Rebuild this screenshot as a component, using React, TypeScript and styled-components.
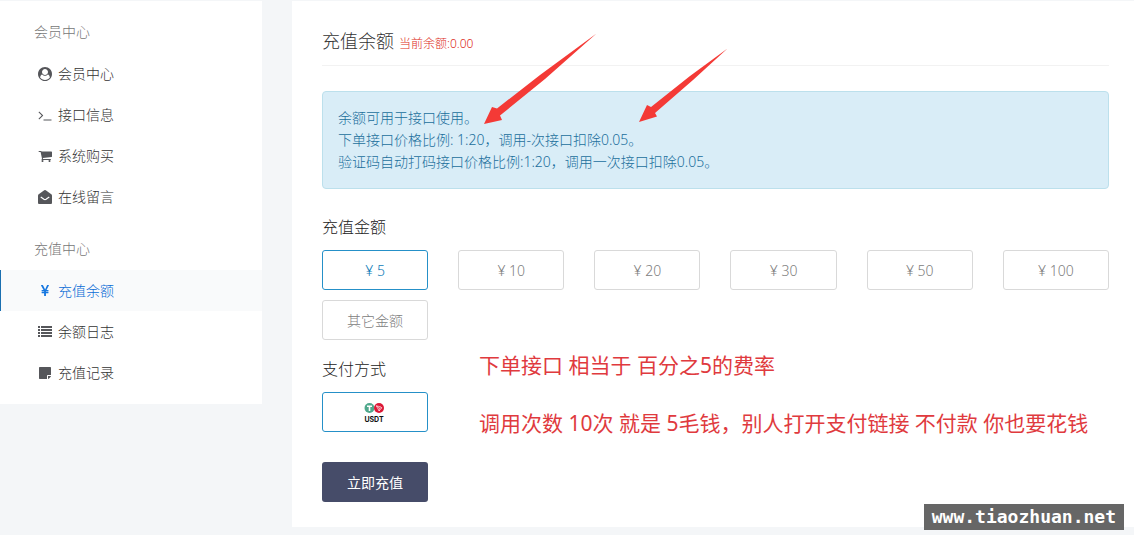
import React, { useState } from "react";
import styled, { createGlobalStyle } from "styled-components";

const GlobalStyle = createGlobalStyle`
  * { box-sizing: border-box; }
  body {
    margin: 0;
    background: #f4f6f8;
    color: #444;
    font: 300 14px/22px "Noto Sans", "Noto Sans CJK SC", sans-serif;
  }
  button { font: inherit; cursor: pointer; }
`;

const Page = styled.div`
  display: flex;
  align-items: flex-start;
  gap: 30px;
  padding: 1px 0 8px;
`;

const Sidebar = styled.nav`
  flex: 0 0 262px;
  background: #fff;
  padding: 10px 0 11px;
`;

const Group = styled.section`
  & + & { margin-top: 11px; }
`;

const GroupTitle = styled.h2`
  margin: 0;
  padding: 10px 34px;
  font-size: 14px;
  font-weight: 300;
  line-height: 22px;
  color: #777;
`;

const NavLink = styled.a<{ $active?: boolean }>`
  display: flex;
  align-items: center;
  gap: 6px;
  height: 41px;
  padding-left: 37px;
  border-left: 1px solid ${(p) => (p.$active ? "#1a6fb0" : "transparent")};
  background: ${(p) => (p.$active ? "#f9fafb" : "transparent")};
  color: ${(p) => (p.$active ? "#0a6cd6" : "#333")};
  text-decoration: none;
`;

const IconSvg = styled.svg<{ $active?: boolean }>`
  flex: none;
  width: 14px;
  height: 14px;
  fill: ${(p) => (p.$active ? "#1677e0" : "#55565a")};
`;

const Main = styled.main`
  position: relative;
  flex: 1;
  min-width: 0;
  background: #fff;
  padding: 25px 25px 25px 30px;
`;

const Header = styled.header`
  display: flex;
  align-items: baseline;
  gap: 5px;
  padding-bottom: 9px;
  border-bottom: 1px solid #f2f2f2;
`;

const Title = styled.h1`
  margin: 0;
  font-size: 18px;
  font-weight: 300;
  line-height: 30px;
  color: #333;
`;

const Balance = styled.small`
  font-size: 12px;
  color: #dd2c22;
`;

const Notice = styled.div`
  margin-top: 25px;
  padding: 15px;
  border: 1px solid #bce0ec;
  border-radius: 4px;
  background: #d9edf7;
  color: #216f9c;
`;

const NoticeLine = styled.p`
  margin: 0;
`;

const Field = styled.fieldset`
  margin: 0;
  padding: 0;
  border: 0;
  min-width: 0;
`;

const Legend = styled.legend`
  padding: 0;
  margin-bottom: 12px;
  font-size: 16px;
  line-height: 22px;
  color: #222;
`;

const Options = styled.div`
  display: grid;
  grid-template-columns: repeat(6, 1fr);
  gap: 10px 30px;
`;

const Option = styled.button<{ $selected?: boolean }>`
  display: flex;
  align-items: center;
  justify-content: center;
  height: 40px;
  padding: 2px 0 0;
  border: 1px solid ${(p) => (p.$selected ? "#2590c8" : "#d9d9d9")};
  border-radius: 3px;
  background: #fff;
  color: ${(p) => (p.$selected ? "#0f7cb8" : "#808080")};
`;

const Form = styled.form`
  display: flex;
  flex-direction: column;
  gap: 18px;
  margin-top: 27px;
`;

const Submit = styled.button`
  height: 40px;
  margin-top: 12px;
  padding: 2px 0 0;
  border: 0;
  border-radius: 3px;
  background: #464c69;
  color: #fff;
  font-weight: 400;
`;

const Arrows = styled.svg`
  position: absolute;
  left: 190px;
  top: 30px;
  width: 250px;
  height: 100px;
  pointer-events: none;
`;

const Remarks = styled.div`
  position: absolute;
  left: 187px;
  top: 349px;
  color: #e03a3e;
  font-size: 21px;
  font-weight: 400;
  line-height: 30px;
  white-space: nowrap;
`;

const Remark = styled.p`
  margin: 0 0 28px;
`;

const Watermark = styled.div`
  position: absolute;
  right: 10px;
  top: 503px;
  padding: 0 8px;
  background: #666;
  color: #fff;
  font: 700 18px/26px "DejaVu Sans Mono", monospace;
`;

const icons = {
  user: (
    <path d="M1523 1339q-22-155-87.500-257.500t-184.500-118.500q-67 74-159.500 115.500t-195.500 41.500-195.500-41.500-159.500-115.500q-119 16-184.500 118.500t-87.500 257.500q106 150 271 237.500t356 87.500 356-87.500 271-237.500zM1280 640q0-159-112.500-271.500t-271.500-112.500-271.500 112.500-112.500 271.500 112.500 271.500 271.500 112.500 271.500-112.500 112.500-271.500zM1792 896q0 182-71 347.500t-190.500 286-285.500 191.500-349 71q-182 0-348-71t-286-191-191-286-71-348 71-348 191-286 286-191 348-71 348 71 286 191 191 286 71 348z" />
  ),
  terminal: (
    <path d="M649 983l-466 466q-10 10-23 10t-23-10l-50-50q-10-10-10-23t10-23l393-393-393-393q-10-10-10-23t10-23l50-50q10-10 23-10t23 10l466 466q10 10 10 23t-10 23zM1728 1504v64q0 14-9 23t-23 9h-960q-14 0-23-9t-9-23v-64q0-14 9-23t23-9h960q14 0 23 9t9 23z" />
  ),
  cart: (
    <path d="M704 1536q0 52-38 90t-90 38-90-38-38-90 38-90 90-38 90 38 38 90zM1600 1536q0 52-38 90t-90 38-90-38-38-90 38-90 90-38 90 38 38 90zM1792 384v576q0 24-16.500 42.500t-40.500 21.500l-1108 122q13 60 13 70 0 16-24 64h984q26 0 45 19t19 45-19 45-45 19h-1088q-26 0-45-19t-19-45q0-11 8-31.500t16-36 21.500-40 15.500-29.500l-177-823h-204q-26 0-45-19t-19-45 19-45 45-19h256q16 0 28.500 6.500t19.500 15.500 13 24.500 8 26h1265q26 0 45 19t19 45z" />
  ),
  mail: (
    <>
      <path d="M896 0q50 0 96 30 380 270 750 552 50 56 50 130v920q0 66-47 113t-113 47h-1472q-66 0-113-47t-47-113v-920q0-78 48-134 370-278 752-548 46-30 96-30z" />
      <path d="M350 900Q620 1080 760 1190Q896 1270 1032 1190Q1172 1080 1442 900" fill="none" stroke="#fff" strokeWidth="150" />
    </>
  ),
  yen: (
    <path d="M985.500 1536h-172q-13 0-22.500-9t-9.500-23v-330h-288q-13 0-22.500-9t-9.500-23v-103q0-13 9.500-22.500t22.500-9.500h288v-85h-288q-13 0-22.500-9t-9.500-23v-104q0-13 9.500-22.500t22.500-9.500h214l-321-578q-8-16 0-32 10-16 28-16h194q19 0 29 18l215 425q19 38 56 125 10-24 30.500-68t27.500-61l191-420q8-19 29-19h191q17 0 27 16 9 14 1 31l-313 579h215q13 0 22.500 9.500t9.500 22.500v104q0 14-9.500 23t-22.500 9h-290v85h290q13 0 22.500 9.500t9.500 22.500v103q0 14-9.500 23t-22.500 9h-290v330q0 13-9.500 22.500t-22.500 9.500z" />
  ),
  list: (
    <path d="M0 128h256v256H0zM384 128h1408v256H384zM0 512h256v256H0zM384 512h1408v256H384zM0 896h256v256H0zM384 896h1408v256H384zM0 1280h256v256H0zM384 1280h1408v256H384z" />
  ),
  note: (
    <path d="M1152 1248v416h-928q-40 0-68-28t-28-68v-1344q0-40 28-68t68-28h1344q40 0 68 28t28 68v928h-416q-40 0-68 28t-28 68zM1280 1280h381q-15 82-65 132l-184 184q-50 50-132 65z" />
  ),
};

type IconName = keyof typeof icons;

function Icon({ name, active }: { name: IconName; active?: boolean }) {
  return (
    <IconSvg viewBox="0 0 1792 1792" $active={active} aria-hidden="true">
      {icons[name]}
    </IconSvg>
  );
}

const menu: { title: string; items: { icon: IconName; label: string; active?: boolean }[] }[] = [
  {
    title: "会员中心",
    items: [
      { icon: "user", label: "会员中心" },
      { icon: "terminal", label: "接口信息" },
      { icon: "cart", label: "系统购买" },
      { icon: "mail", label: "在线留言" },
    ],
  },
  {
    title: "充值中心",
    items: [
      { icon: "yen", label: "充值余额", active: true },
      { icon: "list", label: "余额日志" },
      { icon: "note", label: "充值记录" },
    ],
  },
];

const amounts = ["¥ 5", "¥ 10", "¥ 20", "¥ 30", "¥ 50", "¥ 100", "其它金额"];

function UsdtLogo() {
  return (
    <svg width="22" height="22" viewBox="0 0 22 22" role="img" aria-label="USDT">
      <circle cx="5.500" cy="6" r="5" fill="#4fa88c" />
      <path d="M3 3.500h5v1.400H6.300V9H4.700V4.900H3z" fill="#fff" />
      <circle cx="15" cy="6" r="5" fill="#dc1836" />
      <path d="M12.300 3.800l4.500 1 1 1-2.700 3.200zM12.300 3.800l3 2.200 2.500-.2M15.300 6l-.2 3" fill="none" stroke="#fff" strokeWidth=".6" />
      <text x="10" y="20" textAnchor="middle" fontFamily="Inter, sans-serif" fontSize="7" fontWeight="700" fill="#111">USDT</text>
    </svg>
  );
}

export default function App() {
  const [amount, setAmount] = useState(amounts[0]);
  return (
    <>
      <GlobalStyle />
      <Page>
        <Sidebar>
          {menu.map((group) => (
            <Group key={group.title}>
              <GroupTitle>{group.title}</GroupTitle>
              {group.items.map((item) => (
                <NavLink key={item.label} href="#" $active={item.active}>
                  <Icon name={item.icon} active={item.active} />
                  {item.label}
                </NavLink>
              ))}
            </Group>
          ))}
        </Sidebar>
        <Main>
          <Header>
            <Title>充值余额</Title>
            <Balance>当前余额:0.00</Balance>
          </Header>
          <Notice>
            <NoticeLine>余额可用于接口使用。</NoticeLine>
            <NoticeLine>下单接口价格比例: 1:20，调用-次接口扣除0.05。</NoticeLine>
            <NoticeLine>验证码自动打码接口价格比例:1:20，调用一次接口扣除0.05。</NoticeLine>
          </Notice>
          <Form onSubmit={(e) => e.preventDefault()}>
            <Field>
              <Legend>充值金额</Legend>
              <Options>
                {amounts.map((a) => (
                  <Option key={a} type="button" $selected={a === amount} onClick={() => setAmount(a)}>
                    {a}
                  </Option>
                ))}
              </Options>
            </Field>
            <Field>
              <Legend>支付方式</Legend>
              <Options>
                <Option type="button" $selected>
                  <UsdtLogo />
                </Option>
              </Options>
            </Field>
            <Options>
              <Submit type="submit">立即充值</Submit>
            </Options>
          </Form>
          <Arrows viewBox="482 31 250 100" fill="#f43a36" aria-hidden="true">
            <path d="M596.500 33.500L540 75 497 108.500 492 107 484 124 502 120 500 115.500 545 79Z" />
            <path d="M727.500 48.500L690 76 651 107 647 105 639 122 657 116.500 655 113 693 80Z" />
          </Arrows>
          <Remarks>
            <Remark>下单接口 相当于 百分之5的费率</Remark>
            <Remark>调用次数 10次 就是 5毛钱，别人打开支付链接 不付款 你也要花钱</Remark>
          </Remarks>
          <Watermark>www.tiaozhuan.net</Watermark>
        </Main>
      </Page>
    </>
  );
}
